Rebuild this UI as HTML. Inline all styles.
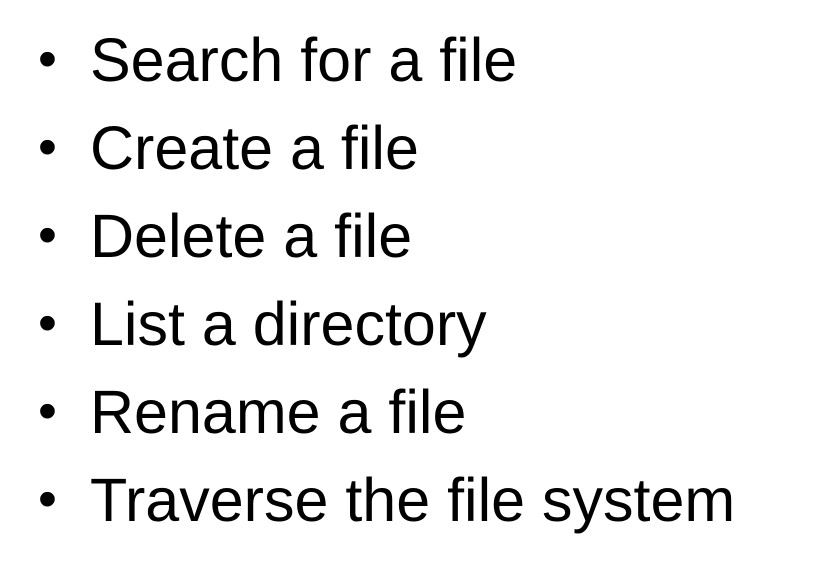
<!DOCTYPE html>
<html><head><style>
html,body{margin:0;padding:0;background:#fff;width:835px;height:573px;overflow:hidden}
.l{position:absolute;left:90px;font-family:"Liberation Sans",Arial,sans-serif;font-size:61px;line-height:1;color:#000;white-space:nowrap}
.b{position:absolute;left:-52px;font-size:54px;top:2px}
</style></head><body>
<div class="l" style="top:30px"><span class="b">•</span>Search for a file</div>
<div class="l" style="top:118px"><span class="b">•</span>Create a file</div>
<div class="l" style="top:206px"><span class="b">•</span>Delete a file</div>
<div class="l" style="top:294px"><span class="b">•</span>List a directory</div>
<div class="l" style="top:382px"><span class="b">•</span>Rename a file</div>
<div class="l" style="top:470px"><span class="b">•</span>Traverse the file system</div>
</body></html>
